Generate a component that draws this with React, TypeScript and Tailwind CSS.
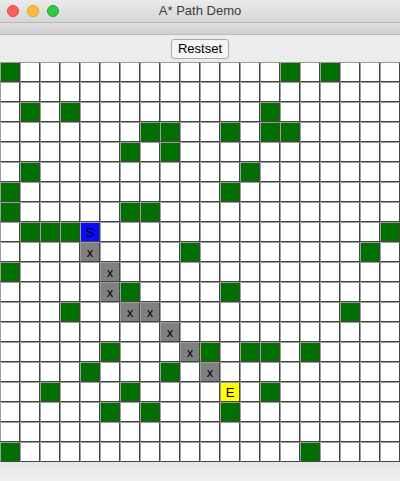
const SIZE = 20

const walls: [number, number][] = [
  [0, 0], [0, 14], [0, 16],
  [2, 1], [2, 3], [2, 13],
  [3, 7], [3, 8], [3, 11], [3, 13], [3, 14],
  [4, 6], [4, 8],
  [5, 1], [5, 12],
  [6, 0], [6, 11],
  [7, 0], [7, 6], [7, 7],
  [8, 1], [8, 2], [8, 3], [8, 19],
  [9, 9], [9, 18],
  [10, 0],
  [11, 6], [11, 11],
  [12, 3], [12, 17],
  [14, 5], [14, 10], [14, 12], [14, 13], [14, 15],
  [15, 4], [15, 8],
  [16, 2], [16, 6], [16, 13],
  [17, 5], [17, 7], [17, 11],
  [19, 0], [19, 15],
]

const path: [number, number][] = [
  [9, 4], [10, 5], [11, 5], [12, 6], [12, 7], [13, 8], [14, 9], [15, 10],
]

type Kind = 'empty' | 'wall' | 'path' | 'start' | 'end'

function buildGrid(): Kind[][] {
  const g: Kind[][] = Array.from({ length: SIZE }, () => Array<Kind>(SIZE).fill('empty'))
  walls.forEach(([r, c]) => (g[r][c] = 'wall'))
  path.forEach(([r, c]) => (g[r][c] = 'path'))
  g[8][4] = 'start'
  g[16][11] = 'end'
  return g
}

const cellClass: Record<Kind, string> = {
  empty: 'bg-white',
  wall: 'bg-[#007100]',
  path: 'bg-[#808080]',
  start: 'bg-[#0a0aff]',
  end: 'bg-[#ffff00]',
}

const label: Record<Kind, string> = {
  empty: '',
  wall: '',
  path: 'x',
  start: 'S',
  end: 'E',
}

function Cell({ kind }: { kind: Kind }) {
  return (
    <div
      className={`flex h-5 w-5 items-center justify-center border border-t-[#9c9c9c] border-l-[#9c9c9c] border-r-[#444] border-b-[#444] pt-px text-[13px] leading-none text-black ${cellClass[kind]}`}
    >
      {label[kind]}
    </div>
  )
}

export default function App() {
  const grid = buildGrid()

  return (
    <div className="flex h-[481px] w-[400px] flex-col overflow-hidden bg-[#ececec] font-['Liberation_Sans',Arial,sans-serif]">
      {/* title bar */}
      <div className="relative flex h-[22px] items-center justify-center bg-[linear-gradient(180deg,#ebebeb,#d5d5d5)]">
        <div className="absolute left-[7px] top-[5px] flex gap-2">
          <span className="h-3 w-3 rounded-full border border-[#e2463f] bg-[#fc605b]" />
          <span className="h-3 w-3 rounded-full border border-[#e1a116] bg-[#fdbc40]" />
          <span className="h-3 w-3 rounded-full border border-[#12ac28] bg-[#34c84a]" />
        </div>
        <span className="text-[13px] text-[#3d3d3d]">A* Path Demo</span>
      </div>

      {/* empty menu strip */}
      <div className="h-[13px] border-y border-[#b9b9b9] bg-[linear-gradient(180deg,#dedede,#cfcfcf)]" />

      {/* toolbar */}
      <div className="flex h-[27px] items-center justify-center">
        <button
          type="button"
          className="h-[20px] rounded-[3px] border border-[#a9a9a9] bg-[#f4f4f4] px-[6px] text-[13px] leading-none text-black"
        >
          Restset
        </button>
      </div>

      {/* grid */}
      <div className="grid grid-cols-[repeat(20,20px)]">
        {grid.map((row, r) => row.map((kind, c) => <Cell key={`${r}-${c}`} kind={kind} />))}
      </div>

      <div className="flex-1 bg-[linear-gradient(180deg,#e6e6e6,#f1f1f1)]" />
    </div>
  )
}
